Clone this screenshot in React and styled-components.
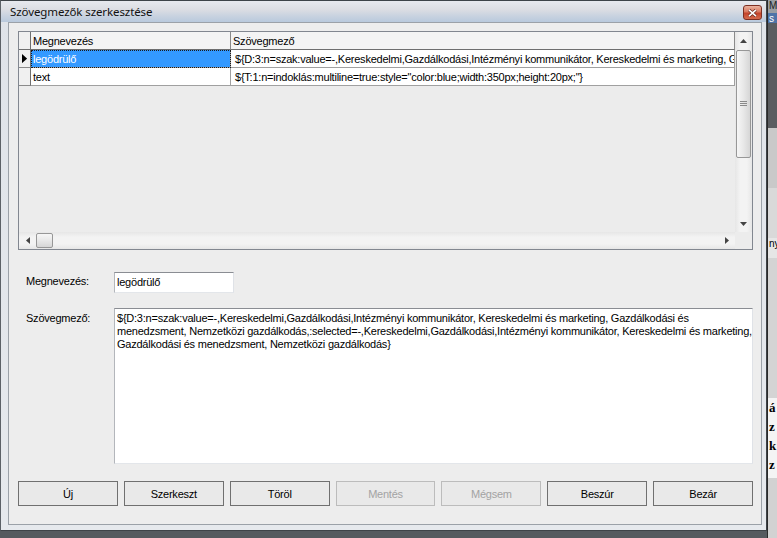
import React from 'react';
import styled, { createGlobalStyle } from 'styled-components';

const Global = createGlobalStyle`
  html, body { margin: 0; padding: 0; background: #4a4a4a; }
  body { font-family: "Liberation Sans", Arial, sans-serif; font-size: 11px; letter-spacing: -0.23px; color: #000; }
  * { box-sizing: border-box; }
`;

const Desktop = styled.div`
  width: 777px;
  height: 538px;
  display: flex;
  overflow: hidden;
  background: #555a5f;
`;

const Window = styled.div`
  width: 767px;
  height: 531px;
  flex: none;
  border: 1px solid #3e4348;
  border-left-color: #5c6167;
  background: linear-gradient(#dfe3e9, #e6e9ed);
  display: flex;
  flex-direction: column;
  padding: 0 4px 5px 7px;
`;

const TitleBar = styled.div`
  height: 21px;
  margin: 0 -4px 0 -7px;
  padding: 0 4px 0 9px;
  display: flex;
  align-items: center;
  justify-content: space-between;
  background: linear-gradient(180deg, #e7e9ee 0%, #dcdde3 40%, #c9d3e0 70%, #b9c9dd 100%);
`;

const Title = styled.span`
  font-family: "Noto Sans", "Open Sans", sans-serif;
  font-size: 11.5px;
  color: #111;
  letter-spacing: -0.1px;
`;

const CloseButton = styled.div`
  width: 19px;
  height: 15px;
  margin-top: 2px;
  border: 1px solid #7d2f22;
  border-radius: 3px;
  background: linear-gradient(180deg, #eab3a0 0%, #d9775e 45%, #c4432a 55%, #d46a4c 100%);
  display: flex;
  align-items: center;
  justify-content: center;
`;

const Client = styled.div`
  flex: 1;
  border: 1px solid #9ba1a8;
  background: #ededed;
  display: flex;
  flex-direction: column;
  padding: 8px 8px 0 9px;
`;

const GridBox = styled.div`
  height: 219px;
  border: 1px solid #828790;
  display: grid;
  grid-template-columns: 1fr 17px;
  grid-template-rows: 1fr 17px;
  background: #ececec;
`;

const DataArea = styled.div`
  overflow: hidden;
  display: grid;
  grid-template-columns: 12px 200px 1fr;
  grid-auto-rows: 18px;
  align-content: start;
`;

const Cell = styled.div`
  border-right: 1px solid ${p => (p.$header ? '#8a8a8a' : '#a0a0a0')};
  border-bottom: 1px solid ${p => (p.$header ? '#6f6f6f' : '#a0a0a0')};
  background: ${p => (p.$selected ? '#3399ff' : p.$header ? '#f4f4f4' : '#ffffff')};
  color: ${p => (p.$selected ? '#ffffff' : '#000')};
  outline: ${p => (p.$selected ? '1px dotted #1a1a1a' : 'none')};
  outline-offset: -1px;
  padding-left: ${p => p.$pad || 2}px;
  white-space: nowrap;
  overflow: hidden;
  display: flex;
  align-items: center;
  min-width: 0;
`;

const RowHead = styled.div`
  border-right: 1px solid #6f6f6f;
  border-bottom: 1px solid ${p => (p.$top ? '#6f6f6f' : '#8a8a8a')};
  background: #f0f0f0;
  display: flex;
  align-items: center;
  justify-content: center;
`;

const VScroll = styled.div`
  background: linear-gradient(90deg, #e6e6e6, #f3f3f3 30%, #f3f3f3 70%, #e6e6e6);
  display: flex;
  flex-direction: column;
  align-items: center;
`;

const HScroll = styled.div`
  background: linear-gradient(180deg, #e6e6e6, #f3f3f3 30%, #f3f3f3 70%, #e6e6e6);
  display: flex;
  align-items: center;
`;

const Corner = styled.div`
  background: #ececec;
`;

const Arrow = styled.div`
  width: 17px;
  height: 17px;
  flex: none;
  display: flex;
  align-items: center;
  justify-content: center;
`;

const VThumb = styled.div`
  width: 15px;
  height: 108px;
  margin-top: 1px;
  border: 1px solid #979797;
  border-radius: 2px;
  background: linear-gradient(90deg, #f6f6f6, #e8e8e8 50%, #d6d6d6);
  display: flex;
  align-items: center;
  justify-content: center;
`;

const HThumb = styled.div`
  width: 17px;
  height: 15px;
  border: 1px solid #979797;
  border-radius: 2px;
  background: linear-gradient(180deg, #f6f6f6, #e8e8e8 50%, #d6d6d6);
`;

const Spacer = styled.div`
  flex: 1;
`;

const FormRow = styled.div`
  display: flex;
  align-items: flex-start;
  padding-left: 8px;
  margin-top: ${p => p.$mt}px;
`;

const Label = styled.div`
  width: 88px;
  flex: none;
  padding-top: ${p => p.$pt || 0}px;
`;

const TextBox = styled.div`
  width: ${p => p.$w}px;
  height: ${p => p.$h}px;
  background: #fff;
  border: 1px solid;
  border-color: #8a8d93 #dfe2e7 #e3e6ea #b3b6bb;
  padding: ${p => (p.$multi ? '3px 2px' : '0 2px')};
  display: flex;
  flex-direction: column;
  justify-content: ${p => (p.$multi ? 'flex-start' : 'center')};
  line-height: 13px;
  white-space: nowrap;
  overflow: hidden;
`;

const ButtonRow = styled.div`
  display: flex;
  gap: 6px;
  margin-top: 17px;
`;

const Button = styled.div`
  width: 100px;
  height: 25px;
  border: 1px solid ${p => (p.$disabled ? '#bcbcbc' : '#707070')};
  background: #e9e9e9;
  color: ${p => (p.$disabled ? '#a3a3a3' : '#000')};
  display: flex;
  align-items: center;
  justify-content: center;
`;

const SideStrip = styled.div`
  flex: 1;
  display: flex;
  flex-direction: column;
  border-left: 1px solid #2a2a2a;
  overflow: hidden;
`;

const Strip = styled.div`
  height: ${p => p.$h}px;
  flex: ${p => (p.$h ? 'none' : '1')};
  background: ${p => p.$bg};
  color: ${p => p.$color || '#000'};
  font-family: ${p => (p.$serif ? '"Liberation Serif", serif' : '"Liberation Sans", sans-serif')};
  font-weight: ${p => (p.$serif ? 'bold' : 'normal')};
  font-size: ${p => (p.$serif ? 13 : 10)}px;
  line-height: ${p => (p.$serif ? 19 : 11)}px;
  letter-spacing: 0;
  padding-left: 1px;
  white-space: pre;
`;

const Tri = ({ dir, color = '#444', size = 1 }) => {
  const pts = {
    up: '0,4 3.5,0 7,4',
    down: '0,0 3.5,4 7,0',
    left: '4,0 0,3.5 4,7',
    right: '0,0 4,3.5 0,7',
  }[dir];
  const vertical = dir === 'up' || dir === 'down';
  const w = (vertical ? 7 : 4) * size;
  const h = (vertical ? 4 : 7) * size;
  return (
    <svg width={w} height={h} viewBox={vertical ? '0 0 7 4' : '0 0 4 7'}>
      <polygon points={pts} fill={color} />
    </svg>
  );
};

const longText =
  '${D:3:n=szak:value=-,Kereskedelmi,Gazdálkodási,Intézményi kommunikátor, Kereskedelmi és marketing, Gazdálkodási és menedzsment, Nemzetközi gazdálkodás,:selected=-,Kereskedelmi,Gazdálkodási,Intézményi kommunikátor, Kereskedelmi és marketing, Gazdálkodási és menedzsment, Nemzetközi gazdálkodás}';

const buttons = [
  { t: 'Új' },
  { t: 'Szerkeszt' },
  { t: 'Töröl' },
  { t: 'Mentés', d: true },
  { t: 'Mégsem', d: true },
  { t: 'Beszúr' },
  { t: 'Bezár' },
];

export default function App() {
  return (
    <>
      <Global />
      <Desktop>
        <Window>
          <TitleBar>
            <Title>Szövegmezők szerkesztése</Title>
            <CloseButton>
              <svg width="9" height="8" viewBox="0 0 9 8">
                <path d="M1 0.8 L8 7.2 M8 0.8 L1 7.2" stroke="#6b2a1e" strokeWidth="3" />
                <path d="M1 0.8 L8 7.2 M8 0.8 L1 7.2" stroke="#ffffff" strokeWidth="1.6" />
              </svg>
            </CloseButton>
          </TitleBar>
          <Client>
            <GridBox>
              <DataArea>
                <RowHead $top />
                <Cell $header>Megnevezés</Cell>
                <Cell $header>Szövegmező</Cell>
                <RowHead>
                  <Tri dir="right" color="#000" size={1.3} />
                </RowHead>
                <Cell $selected>legödrülő</Cell>
                <Cell $pad={4}>{longText}</Cell>
                <RowHead />
                <Cell>text</Cell>
                <Cell $pad={4}>{'${T:1:n=indoklás:multiline=true:style="color:blue;width:350px;height:20px;"}'}</Cell>
              </DataArea>
              <VScroll>
                <Arrow><Tri dir="up" /></Arrow>
                <VThumb>
                  <svg width="7" height="6" viewBox="0 0 7 6">
                    <path d="M0 0.5 H7 M0 2.5 H7 M0 4.5 H7" stroke="#8a8a8a" strokeWidth="1" />
                  </svg>
                </VThumb>
                <Spacer />
                <Arrow><Tri dir="down" /></Arrow>
              </VScroll>
              <HScroll>
                <Arrow><Tri dir="left" /></Arrow>
                <HThumb />
                <Spacer />
                <Arrow><Tri dir="right" /></Arrow>
              </HScroll>
              <Corner />
            </GridBox>

            <FormRow $mt={22}>
              <Label $pt={3}>Megnevezés:</Label>
              <TextBox $w={120} $h={21}>legödrülő</TextBox>
            </FormRow>
            <FormRow $mt={15}>
              <Label $pt={4}>Szövegmező:</Label>
              <TextBox $w={639} $h={156} $multi>
                <span>{'${D:3:n=szak:value=-,Kereskedelmi,Gazdálkodási,Intézményi kommunikátor, Kereskedelmi és marketing, Gazdálkodási és'}</span>
                <span>menedzsment, Nemzetközi gazdálkodás,:selected=-,Kereskedelmi,Gazdálkodási,Intézményi kommunikátor, Kereskedelmi és marketing,</span>
                <span>{'Gazdálkodási és menedzsment, Nemzetközi gazdálkodás}'}</span>
              </TextBox>
            </FormRow>

            <ButtonRow>
              {buttons.map(b => (
                <Button key={b.t} $disabled={b.d}>{b.t}</Button>
              ))}
            </ButtonRow>
          </Client>
        </Window>
        <SideStrip>
          <Strip $h={13} $bg="#9a9ea3" $color="#222">M</Strip>
          <Strip $h={10} $bg="#4f74a8" $color="#fff">s</Strip>
          <Strip $h={105} $bg="#5a5d61" />
          <Strip $h={60} $bg="#c9c9c9" />
          <Strip $h={50} $bg="#d9d9d9" />
          <Strip $h={20} $bg="#e6e6e6">ny</Strip>
          <Strip $h={140} $bg="#d4d4d4" />
          <Strip $h={80} $bg="#f4f4f4" $serif>{'á\nz\nk\nz'}</Strip>
          <Strip $bg="#d2d2d2" />
        </SideStrip>
      </Desktop>
    </>
  );
}
